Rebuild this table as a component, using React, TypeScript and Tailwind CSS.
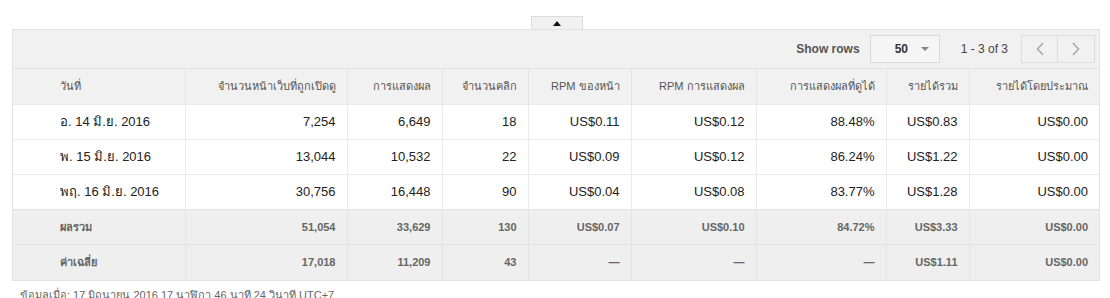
import React from "react";

const cols = [172, 162, 95, 86, 103, 125, 130, 83, 130];

const headers = [
  "วันที่",
  "จำนวนหน้าเว็บที่ถูกเปิดดู",
  "การแสดงผล",
  "จำนวนคลิก",
  "RPM ของหน้า",
  "RPM การแสดงผล",
  "การแสดงผลที่ดูได้",
  "รายได้รวม",
  "รายได้โดยประมาณ",
];

const rows = [
  ["อ. 14 มิ.ย. 2016", "7,254", "6,649", "18", "US$0.11", "US$0.12", "88.48%", "US$0.83", "US$0.00"],
  ["พ. 15 มิ.ย. 2016", "13,044", "10,532", "22", "US$0.09", "US$0.12", "86.24%", "US$1.22", "US$0.00"],
  ["พฤ. 16 มิ.ย. 2016", "30,756", "16,448", "90", "US$0.04", "US$0.08", "83.77%", "US$1.28", "US$0.00"],
];

const summary = [
  ["ผลรวม", "51,054", "33,629", "130", "US$0.07", "US$0.10", "84.72%", "US$3.33", "US$0.00"],
  ["ค่าเฉลี่ย", "17,018", "11,209", "43", "—", "—", "—", "US$1.11", "US$0.00"],
];

export default function App() {
  return (
    <div className="w-[1110px] h-[298px] overflow-hidden bg-white pt-[16px] font-['Liberation_Sans','Noto_Sans','DejaVu_Sans',sans-serif]">
      {/* collapse tab */}
      <div className="flex justify-center">
        <div className="ml-[4px] w-[52px] h-[13px] bg-[#f1f1f1] border border-b-0 border-[#dcdcdc] flex items-center justify-center">
          <svg width="8" height="5" viewBox="0 0 8 5"><path d="M4 0 L8 5 L0 5 Z" fill="#111" /></svg>
        </div>
      </div>

      <div className="mx-[12px] w-[1088px] border border-[#e2e2e2] bg-[#f1f1f1]">
        {/* toolbar */}
        <div className="h-[38px] flex items-center justify-end pr-[4px] text-[11px] text-[#444]">
          <span className="font-bold text-[12px] text-[#555] mr-[10px]">Show rows</span>
          <div className="w-[70px] h-[28px] border border-[#d9d9d9] bg-[#f5f5f5] flex items-center justify-between pl-[24px] pr-[10px] mr-[21px]">
            <span className="font-bold text-[#333] text-[12px]">50</span>
            <svg width="8" height="4" viewBox="0 0 8 4"><path d="M0 0 L8 0 L4 4 Z" fill="#888" /></svg>
          </div>
          <span className="mr-[13px] text-[12px] text-[#444]">1 - 3 of 3</span>
          <div className="flex h-[28px] border border-[#dcdcdc]">
            <div className="w-[36px] flex items-center justify-center border-r border-[#dcdcdc]">
              <svg width="8" height="14" viewBox="0 0 8 14"><path d="M7 1 L1.5 7 L7 13" stroke="#aaa" strokeWidth="1.6" fill="none" /></svg>
            </div>
            <div className="w-[36px] flex items-center justify-center">
              <svg width="8" height="14" viewBox="0 0 8 14"><path d="M1 1 L6.5 7 L1 13" stroke="#aaa" strokeWidth="1.6" fill="none" /></svg>
            </div>
          </div>
        </div>

        <table className="table-fixed border-collapse w-full">
          <colgroup>
            {cols.map((w, i) => (
              <col key={i} style={{ width: w }} />
            ))}
          </colgroup>
          <thead>
            <tr className="h-[36px] border-t border-[#e2e2e2]">
              {headers.map((h, i) => (
                <th
                  key={i}
                  className={`font-normal text-[11px] text-[#555] border-l first:border-l-0 border-[#e4e4e4] ${i === 0 ? "text-left pl-[47px]" : "text-right pr-[11px]"}`}
                >
                  {h}
                </th>
              ))}
            </tr>
          </thead>
          <tbody>
            {rows.map((r, ri) => (
              <tr key={ri} className="h-[35px] bg-white border-t border-[#ebebeb]">
                {r.map((c, i) => (
                  <td
                    key={i}
                    className={`text-[13px] text-[#222] border-l first:border-l-0 border-[#ebebeb] ${i === 0 ? "text-left pl-[47px]" : "text-right pr-[11px]"}`}
                  >
                    {c}
                  </td>
                ))}
              </tr>
            ))}
            {summary.map((r, ri) => (
              <tr key={ri} className="h-[35px] bg-[#efefef] border-t border-[#e2e2e2]">
                {r.map((c, i) => (
                  <td
                    key={i}
                    className={`text-[11px] font-bold text-[#666] border-l first:border-l-0 border-[#e4e4e4] ${i === 0 ? "text-left pl-[47px]" : "text-right pr-[11px]"}`}
                  >
                    {c}
                  </td>
                ))}
              </tr>
            ))}
          </tbody>
        </table>
      </div>

      <p className="mt-[7px] pl-[20px] text-[11px] leading-[14px] text-[#666]">
        ข้อมูลเมื่อ: 17 มิถุนายน 2016 17 นาฬิกา 46 นาที 24 วินาที UTC+7
      </p>
    </div>
  );
}
